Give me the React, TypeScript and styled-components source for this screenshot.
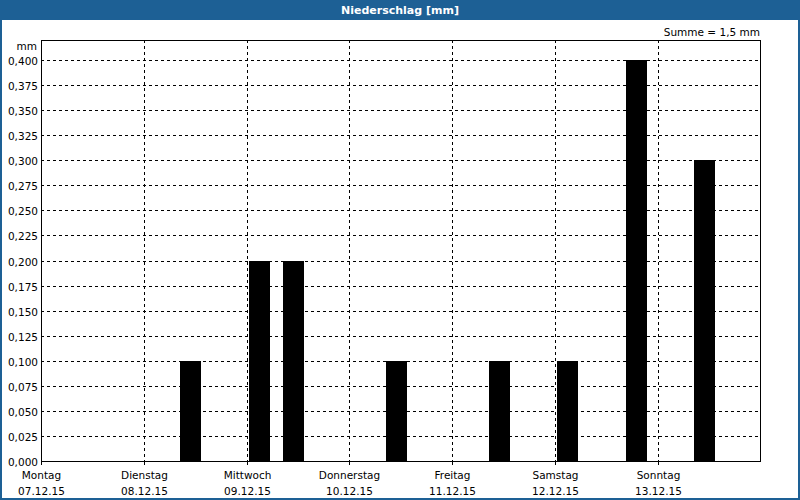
import React from "react";
import styled, { createGlobalStyle } from "styled-components";

const Global = createGlobalStyle`
  body { margin: 0; background: #fff; font-family: "DejaVu Sans", Verdana, sans-serif; }
`;

const Frame = styled.div`
  width: 800px;
  height: 500px;
  box-sizing: border-box;
  border: 2px solid #1d6095;
  border-top: none;
  display: flex;
  flex-direction: column;
  background: #fff;
`;

const TitleBar = styled.div`
  height: 20px;
  margin: 0 -2px;
  background: #1d6095;
  color: #fff;
  font-size: 11px;
  font-weight: bold;
  display: flex;
  align-items: center;
  justify-content: center;
`;

const Plot = styled.svg`
  display: block;
  font-family: "DejaVu Sans", Verdana, sans-serif;
  font-size: 10.5px;
`;

const L = 41, R = 760, T = 40, B = 461;
const step = (B - 60) / 16;
const yOf = (v: number) => B - (v / 0.025) * step;
const days = [
  ["Montag", "07.12.15"], ["Dienstag", "08.12.15"], ["Mittwoch", "09.12.15"],
  ["Donnerstag", "10.12.15"], ["Freitag", "11.12.15"], ["Samstag", "12.12.15"],
  ["Sonntag", "13.12.15"],
];
const dayW = 102.8;
const bars: [number, number][] = [
  [180, 0.1], [249, 0.2], [283, 0.2], [386, 0.1], [489, 0.1], [557, 0.1], [626, 0.4], [694, 0.3],
];

export default function App() {
  return (
    <>
      <Global />
      <Frame>
        <TitleBar>Niederschlag [mm]</TitleBar>
        <Plot width={796} height={478} viewBox="2 20 796 478">
          <text x={760} y={36} textAnchor="end">Summe = 1,5 mm</text>
          <text x={37} y={50} textAnchor="end">mm</text>
          {Array.from({ length: 17 }, (_, k) => {
            const y = Math.round(B - k * step) + 0.5;
            return (
              <g key={k}>
                {k > 0 && <line x1={L} x2={R} y1={y} y2={y} stroke="#000" strokeDasharray="3 3" />}
                <text x={38} y={y + 4} textAnchor="end">{(k * 0.025).toFixed(3).replace(".", ",")}</text>
              </g>
            );
          })}
          {days.map((d, i) => {
            const x = Math.round(L + i * dayW) + 0.5;
            return (
              <g key={d[0]}>
                {i > 0 && <line x1={x} x2={x} y1={T} y2={B} stroke="#000" strokeDasharray="3 3" />}
                <line x1={x} x2={x} y1={B} y2={B + 4} stroke="#000" />
                <text x={x} y={479} textAnchor="middle">{d[0]}</text>
                <text x={x} y={495} textAnchor="middle">{d[1]}</text>
              </g>
            );
          })}
          {bars.map(([x, v]) => (
            <rect key={x} x={x} y={Math.round(yOf(v))} width={21} height={B - Math.round(yOf(v))} fill="#000" />
          ))}
          <rect x={L + 0.5} y={T + 0.5} width={R - L} height={B - T} fill="none" stroke="#000" />
        </Plot>
      </Frame>
    </>
  );
}
